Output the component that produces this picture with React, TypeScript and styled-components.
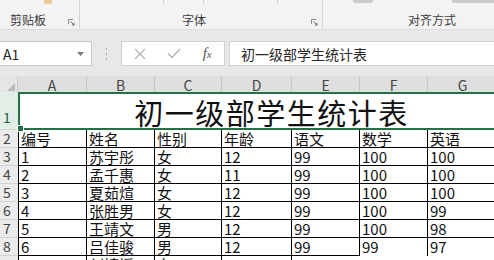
import styled, { createGlobalStyle } from "styled-components";

const GlobalStyle = createGlobalStyle`
  html, body {
    margin: 0;
    padding: 0;
    background: #ffffff;
  }
  body {
    font-family: "Noto Sans CJK SC", "Noto Sans", sans-serif;
  }
`;

const COLS = ["A", "B", "C", "D", "E", "F", "G"];

const ROWS: string[][] = [
  ["编号", "姓名", "性别", "年龄", "语文", "数学", "英语"],
  ["1", "苏宇彤", "女", "12", "99", "100", "100"],
  ["2", "孟千惠", "女", "11", "99", "100", "100"],
  ["3", "夏茹煊", "女", "12", "99", "100", "100"],
  ["4", "张胜男", "女", "12", "99", "100", "99"],
  ["5", "王靖文", "男", "12", "99", "100", "98"],
  ["6", "吕佳骏", "男", "12", "99", "99", "97"],
  ["7", "刘婧媛", "女", "12", "99", "", ""],
];

const App = () => {
  return (
    <>
      <GlobalStyle />
      <Window>
        <Ribbon>
          <Group $w={79}>
            <TopStrip>
              <Bit $w={8} $h={4} $c="#e9c898" $ml={44} />
            </TopStrip>
            <LabelRow $pl={10}>
              <GroupLabel>剪贴板</GroupLabel>
              <Launcher />
            </LabelRow>
          </Group>
          <Group $w={242}>
            <TopStrip>
              <Bit $w={1} $h={4} $c="#d0d0d0" $ml={83} />
              <Bit $w={1} $h={4} $c="#d0d0d0" $ml={39} />
              <Bit $w={1} $h={4} $c="#d0d0d0" $ml={73} />
            </TopStrip>
            <LabelRow $pl={102}>
              <GroupLabel>字体</GroupLabel>
              <Launcher />
            </LabelRow>
          </Group>
          <Group $w={180} $last>
            <TopStrip>
              <Bit $w={20} $h={3} $c="#cacaca" $ml={30} />
              <Bit $w={50} $h={3} $c="#cacaca" $ml={79} />
            </TopStrip>
            <LabelRow $pl={85}>
              <GroupLabel>对齐方式</GroupLabel>
            </LabelRow>
          </Group>
        </Ribbon>

        <FormulaBar>
          <NameBox>
            <span>A1</span>
            <svg width="7" height="4" viewBox="0 0 7 4">
              <polygon points="0,0 7,0 3.5,4" fill="#7a7a7a" />
            </svg>
          </NameBox>
          <Grip>
            <Dot />
            <Dot />
            <Dot />
          </Grip>
          <ButtonsBox>
            <IconSlot>
              <svg width="12" height="12" viewBox="0 0 12 12">
                <path d="M1 1 L11 11 M11 1 L1 11" stroke="#b4b4b4" strokeWidth="1.4" fill="none" />
              </svg>
            </IconSlot>
            <IconSlot>
              <svg width="14" height="11" viewBox="0 0 14 11">
                <path d="M1 5.5 L5 9.5 L13 1" stroke="#b4b4b4" strokeWidth="1.5" fill="none" />
              </svg>
            </IconSlot>
            <IconSlot>
              <Fx>
                f<small>x</small>
              </Fx>
            </IconSlot>
          </ButtonsBox>
          <FxInput>初一级部学生统计表</FxInput>
        </FormulaBar>

        <Sheet>
          <Corner>
            <svg width="8" height="8" viewBox="0 0 8 8">
              <polygon points="8,0 8,8 0,8" fill="#b9b9b9" />
            </svg>
          </Corner>
          {COLS.map((c) => (
            <ColHeader key={c}>{c}</ColHeader>
          ))}

          <RowHeader $active>1</RowHeader>
          <TitleCell>
            初一级部学生统计表
            <FillHandle />
          </TitleCell>

          {ROWS.map((row, r) => {
            const rowNo = r + 2;
            const lastRow = rowNo === 8;
            const tailRow = rowNo === 9;
            return [
              <RowHeader key={`h${rowNo}`}>{rowNo}</RowHeader>,
              ...row.map((v, c) => (
                <DataCell
                  key={`${rowNo}-${c}`}
                  $first={c === 0}
                  $noBottom={(lastRow || tailRow) && c > 4}
                  $noRight={tailRow && c > 3}
                >
                  {v}
                </DataCell>
              )),
            ];
          })}
        </Sheet>
      </Window>
    </>
  );
};

export default App;

const Launcher = () => (
  <LauncherIcon width="7" height="7" viewBox="0 0 7 7">
    <path d="M0.5 5 V0.5 H5" stroke="#8a8a8a" strokeWidth="1" fill="none" />
    <path d="M2.5 2.5 L6 6" stroke="#6a6a6a" strokeWidth="1" />
    <polygon points="6.5,6.5 3.5,6.5 6.5,3.5" fill="#6a6a6a" />
  </LauncherIcon>
);

// Styled Components
const Window = styled.div`
  width: 494px;
  height: 260px;
  overflow: hidden;
  display: flex;
  flex-direction: column;
  background: #ffffff;
`;

const Ribbon = styled.div`
  height: 30px;
  flex: none;
  display: flex;
  box-sizing: border-box;
  background: #f3f3f3;
  border-bottom: 1px solid #dcdcdc;
`;

const Group = styled.div<{ $w: number; $last?: boolean }>`
  width: ${(p) => p.$w}px;
  flex: none;
  height: 28px;
  display: flex;
  flex-direction: column;
  justify-content: space-between;
  border-right: ${(p) => (p.$last ? "none" : "1px solid #d4d4d4")};
`;

const TopStrip = styled.div`
  height: 4px;
  display: flex;
  align-items: flex-start;
`;

const Bit = styled.div<{ $w: number; $h: number; $c: string; $ml: number }>`
  flex: none;
  width: ${(p) => p.$w}px;
  height: ${(p) => p.$h}px;
  margin-left: ${(p) => p.$ml}px;
  background: ${(p) => p.$c};
  border-radius: 0 0 2px 2px;
`;

const LabelRow = styled.div<{ $pl: number }>`
  display: flex;
  align-items: center;
  height: 14px;
  margin-bottom: 1px;
  padding-left: ${(p) => p.$pl}px;
  padding-right: 4px;
`;

const GroupLabel = styled.span`
  font-size: 12px;
  line-height: 14px;
  color: #3c3c3c;
  white-space: nowrap;
`;

const LauncherIcon = styled.svg`
  margin-left: auto;
  margin-top: 4px;
  flex: none;
`;

const FormulaBar = styled.div`
  height: 46px;
  flex: none;
  box-sizing: border-box;
  padding-top: 11px;
  display: flex;
  align-items: flex-start;
  background: #e8e8e8;
`;

const NameBox = styled.div`
  width: 92px;
  height: 25px;
  flex: none;
  box-sizing: border-box;
  display: flex;
  align-items: center;
  justify-content: space-between;
  padding: 0 7px 0 3px;
  background: #ffffff;
  border: 1px solid #c8c8c8;
  border-left: none;
  font-size: 14px;
  color: #262626;
`;

const Grip = styled.div`
  width: 29px;
  height: 25px;
  flex: none;
  display: flex;
  flex-direction: column;
  align-items: center;
  justify-content: center;
  gap: 3px;
`;

const Dot = styled.div`
  width: 1px;
  height: 2px;
  background: #a8a8a8;
`;

const ButtonsBox = styled.div`
  width: 104px;
  height: 25px;
  flex: none;
  box-sizing: border-box;
  display: flex;
  align-items: center;
  padding-left: 1px;
  background: #ffffff;
  border: 1px solid #d2d2d2;
`;

const IconSlot = styled.div`
  width: 34px;
  display: flex;
  align-items: center;
  justify-content: center;
`;

const Fx = styled.span`
  font-family: "Liberation Serif", "DejaVu Serif", serif;
  font-style: italic;
  font-size: 15px;
  color: #555555;
  line-height: 1;

  small {
    font-size: 11px;
  }
`;

const FxInput = styled.div`
  flex: 1;
  height: 25px;
  margin-left: 4px;
  box-sizing: border-box;
  display: flex;
  align-items: center;
  padding-left: 11px;
  background: #ffffff;
  border: 1px solid #d2d2d2;
  border-right: none;
  font-size: 14px;
  color: #262626;
  white-space: nowrap;
`;

const Sheet = styled.div`
  display: grid;
  grid-template-columns: 18px 69px 68px 67px 70px 68px 68px 70px;
  grid-template-rows: 16px 38px repeat(8, 18px);
  width: 498px;
  flex: none;
`;

const Corner = styled.div`
  box-sizing: border-box;
  display: flex;
  align-items: flex-end;
  justify-content: flex-end;
  padding: 0 2px 1px 0;
  background: #e6e6e6;
  border-right: 1px solid #cacaca;
`;

const ColHeader = styled.div`
  box-sizing: border-box;
  padding-top: 3px;
  text-align: center;
  font-size: 14px;
  line-height: 13px;
  color: #444444;
  background: #dfdfdf;
  border-right: 1px solid #c6c6c6;
`;

const RowHeader = styled.div<{ $active?: boolean }>`
  box-sizing: border-box;
  display: flex;
  align-items: flex-end;
  padding: 0 0 ${(p) => (p.$active ? "3px" : "0")} 3px;
  font-size: 14px;
  line-height: 17px;
  color: ${(p) => (p.$active ? "#21603c" : "#444444")};
  background: ${(p) => (p.$active ? "#e2efe6" : "#ebebeb")};
  border-bottom: 1px solid #d3d3d3;
`;

const TitleCell = styled.div`
  grid-column: 2 / span 7;
  position: relative;
  box-sizing: border-box;
  display: flex;
  align-items: flex-end;
  justify-content: center;
  padding: 0 0 1px 27px;
  border: 2px solid #217346;
  background: #ffffff;
  font-size: 29px;
  line-height: 1;
  letter-spacing: 1.5px;
  color: #111111;
  white-space: nowrap;
`;

const FillHandle = styled.div`
  position: absolute;
  left: -3px;
  bottom: -4px;
  width: 5px;
  height: 5px;
  background: #217346;
  border: 1px solid #ffffff;
`;

const DataCell = styled.div<{ $first?: boolean; $noBottom?: boolean; $noRight?: boolean }>`
  box-sizing: border-box;
  padding-left: 2px;
  font-size: 15px;
  line-height: 17px;
  color: #111111;
  white-space: nowrap;
  border-left: ${(p) => (p.$first ? "1px solid #000" : "none")};
  border-right: ${(p) => (p.$noRight ? "none" : "1px solid #000")};
  border-bottom: ${(p) => (p.$noBottom ? "none" : "1px solid #000")};
`;
